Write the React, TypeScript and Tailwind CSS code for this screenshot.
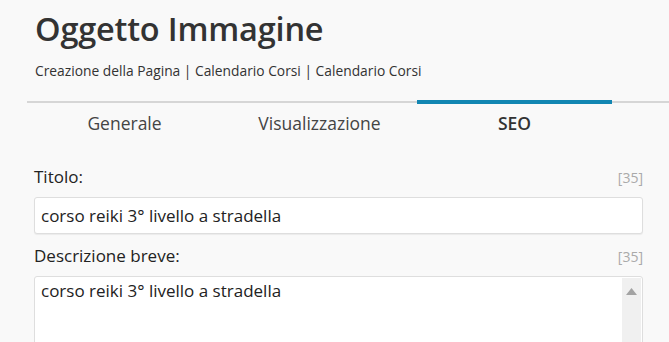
import React from 'react'

const font = { fontFamily: '"Open Sans", "Noto Sans", Arial, sans-serif' }

function Tab({ label, active }: { label: string; active?: boolean }) {
  return (
    <div
      className={`w-[195px] -mt-[3px] border-t-4 flex justify-center pt-[7px] text-[17.5px] leading-[24px] ${
        active ? 'border-[#1286b2] font-semibold text-[#333]' : 'border-transparent text-[#444]'
      }`}
    >
      {label}
    </div>
  )
}

export default function App() {
  return (
    <div className="h-[342px] w-[669px] overflow-hidden bg-[#f9f9f9] text-[#333]" style={font}>
      {/* Header */}
      <div className="pl-[35px] pt-[9px]">
        <h1 className="text-[32.5px] leading-[40px] font-semibold text-[#333] tracking-[-0.2px]">Oggetto Immagine</h1>
        <p className="mt-[13px] text-[13.8px] leading-[18px] text-[#333]">
          Creazione della Pagina | Calendario Corsi | Calendario Corsi
        </p>
      </div>

      {/* Tabs */}
      <div className="mt-[21px] ml-[27px] flex border-t-2 border-[#d6d6d6]">
        <Tab label="Generale" />
        <Tab label="Visualizzazione" />
        <Tab label="SEO" active />
      </div>

      {/* Form */}
      <div className="pl-[34px] pr-[26px] pt-[31px]">
        <div className="flex items-baseline justify-between mb-[8px]">
          <span className="text-[17px] leading-[22px] text-[#222]">Titolo:</span>
          <span className="text-[14px] leading-[22px] text-[#aaa]">[35]</span>
        </div>
        <div className="h-[37px] rounded-[3px] border border-[#dedede] bg-white flex items-center px-[6px] text-[17px] text-[#222] shadow-[0_1px_1px_rgba(0,0,0,0.06)]">
          corso reiki 3° livello a stradella
        </div>

        <div className="flex items-baseline justify-between pt-[11px] mb-[8px]">
          <span className="text-[17px] leading-[22px] text-[#222]">Descrizione breve:</span>
          <span className="text-[14px] leading-[22px] text-[#aaa]">[35]</span>
        </div>
        <div className="h-[90px] rounded-[3px] border border-[#dedede] bg-white flex">
          <div className="flex-1 px-[6px] pt-[3px] text-[17px] leading-[22px] text-[#222]">
            corso reiki 3° livello a stradella
          </div>
          <div className="w-[19px] mr-[1px] mt-[1px] bg-[#f0f0f0] flex justify-center pt-[10px]">
            <svg width="11" height="7" viewBox="0 0 11 7">
              <path d="M5.5 0 L11 7 L0 7 Z" fill="#a3a3a3" />
            </svg>
          </div>
        </div>
      </div>
    </div>
  )
}
